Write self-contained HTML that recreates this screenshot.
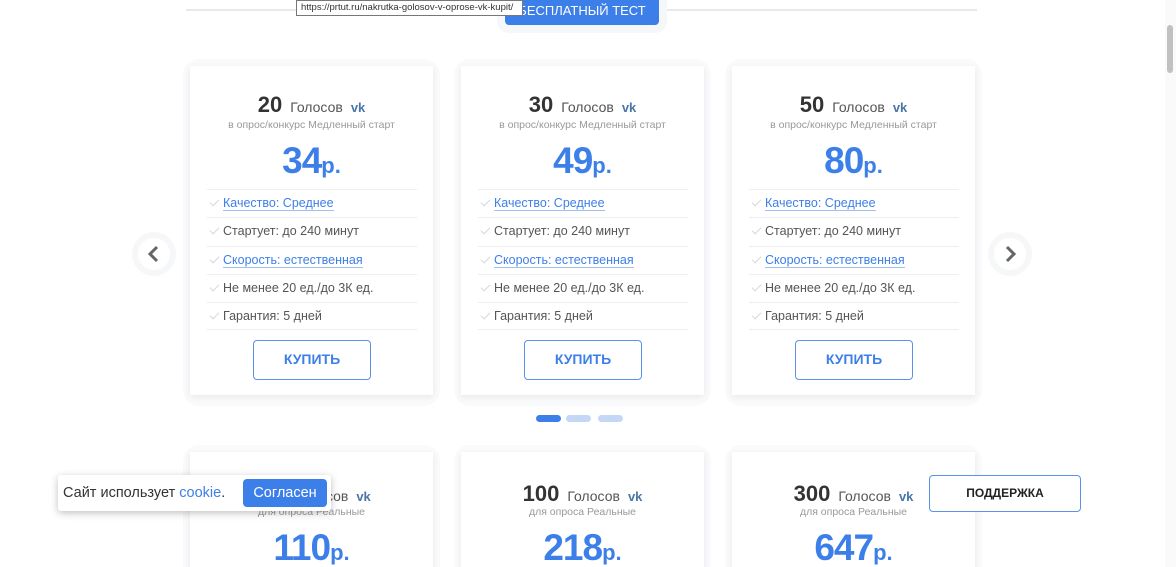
<!DOCTYPE html><html><head><meta charset="utf-8"><style>
*{box-sizing:border-box;margin:0;padding:0}
html,body{width:1176px;height:567px;overflow:hidden}
body{background:#fff;font-family:"Liberation Sans",sans-serif;position:relative;color:#333}
.abs{position:absolute}
.halo{position:absolute;background:#f9fafb;border-radius:16px}
.card{position:absolute;width:243px;background:#fff;box-shadow:0 2px 6px rgba(0,0,0,.07);text-align:center}
.t{position:absolute;left:0;right:0;top:26px;font-size:14px;color:#555}
.t b{font-size:22px;color:#333;font-weight:bold;margin-right:8px}
.vk{color:#4a76a8;font-weight:bold;font-size:13px;margin-left:8px}
.s{position:absolute;left:0;right:0;top:53px;font-size:10.5px;color:#999}
.p{position:absolute;left:0;right:0;top:74px;font-size:37px;font-weight:bold;color:#3d7fe8;letter-spacing:-1px}
.p span{font-size:22px;letter-spacing:0}
.rows{position:absolute;left:17px;width:210px;top:123px}
.r{height:28.3px;border-top:1px solid #eceef1;text-align:left;font-size:12.5px;color:#555;line-height:27px;padding-left:16px;position:relative}
.r:before{content:"";position:absolute;left:3px;top:9px;width:8px;height:4px;border-left:1.3px solid #d5d8dc;border-bottom:1.3px solid #d5d8dc;transform:rotate(-45deg)}
.r.l a{color:#3d7fe8;border-bottom:1px solid #9dbff3;text-decoration:none}
.r.last{border-bottom:1px solid #eceef1}
.btn{position:absolute;left:63px;top:274px;width:118px;height:40px;border:1.5px solid #5b92ec;border-radius:4px;color:#3d7fe8;font-weight:bold;font-size:14px;line-height:37px}
.arr{position:absolute;width:32px;height:32px;border-radius:50%;background:#fff;box-shadow:0 0 0 6px #f6f7f9}
</style></head><body>
<div class="abs" style="left:186px;top:9px;width:791px;height:2px;background:#e8e9ec"></div>
<div class="abs" style="left:497px;top:0;width:170px;height:33px;background:#f6f7f9;border-radius:0 0 12px 12px"></div>
<div class="abs" style="left:505px;top:0;width:154px;height:25px;background:#3d7fe8;border-radius:0 0 4px 4px;color:#fff;font-size:13px;line-height:22px;text-align:center">БЕСПЛАТНЫЙ ТЕСТ</div>
<div class="abs" style="left:296px;top:0;width:227px;height:16px;background:#fff;border:1px solid #777;font-size:9.5px;line-height:14px;padding-left:4px;color:#333">https://prtut.ru/nakrutka-golosov-v-oprose-vk-kupit/</div>

<div class="halo" style="left:183px;top:59px;width:257px;height:347px"></div>
<div class="halo" style="left:454px;top:59px;width:257px;height:347px"></div>
<div class="halo" style="left:725px;top:59px;width:257px;height:347px"></div>
<div class="halo" style="left:183px;top:445px;width:257px;height:140px"></div>
<div class="halo" style="left:454px;top:445px;width:257px;height:140px"></div>
<div class="halo" style="left:725px;top:445px;width:257px;height:140px"></div>

<div class="card" style="left:190px;top:66px;height:329px"><div class="t"><b>20</b>Голосов<span class="vk">vk</span></div><div class="s">в опрос/конкурс Медленный старт</div><div class="p">34<span>р.</span></div>
<div class="rows"><div class="r l"><a>Качество: Среднее</a></div><div class="r">Стартует: до 240 минут</div><div class="r l"><a>Скорость: естественная</a></div><div class="r">Не менее 20 ед./до 3К ед.</div><div class="r last">Гарантия: 5 дней</div></div><div class="btn">КУПИТЬ</div></div>
<div class="card" style="left:461px;top:66px;height:329px"><div class="t"><b>30</b>Голосов<span class="vk">vk</span></div><div class="s">в опрос/конкурс Медленный старт</div><div class="p">49<span>р.</span></div>
<div class="rows"><div class="r l"><a>Качество: Среднее</a></div><div class="r">Стартует: до 240 минут</div><div class="r l"><a>Скорость: естественная</a></div><div class="r">Не менее 20 ед./до 3К ед.</div><div class="r last">Гарантия: 5 дней</div></div><div class="btn">КУПИТЬ</div></div>
<div class="card" style="left:732px;top:66px;height:329px"><div class="t"><b>50</b>Голосов<span class="vk">vk</span></div><div class="s">в опрос/конкурс Медленный старт</div><div class="p">80<span>р.</span></div>
<div class="rows"><div class="r l"><a>Качество: Среднее</a></div><div class="r">Стартует: до 240 минут</div><div class="r l"><a>Скорость: естественная</a></div><div class="r">Не менее 20 ед./до 3К ед.</div><div class="r last">Гарантия: 5 дней</div></div><div class="btn">КУПИТЬ</div></div>

<div class="card" style="left:190px;top:452px;height:130px"><div class="t" style="top:29px"><b>110</b>Голосов<span class="vk">vk</span></div><div class="s" style="top:54px">для опроса Реальные</div><div class="p" style="top:75px">110<span>р.</span></div></div>
<div class="card" style="left:461px;top:452px;height:130px"><div class="t" style="top:29px"><b>100</b>Голосов<span class="vk">vk</span></div><div class="s" style="top:54px">для опроса Реальные</div><div class="p" style="top:75px">218<span>р.</span></div></div>
<div class="card" style="left:732px;top:452px;height:130px"><div class="t" style="top:29px"><b>300</b>Голосов<span class="vk">vk</span></div><div class="s" style="top:54px">для опроса Реальные</div><div class="p" style="top:75px">647<span>р.</span></div></div>

<div class="arr" style="left:138px;top:238px"><svg width="32" height="32"><path d="M19 9 L12 16 L19 23" fill="none" stroke="#666" stroke-width="3"/></svg></div>
<div class="arr" style="left:994px;top:238px"><svg width="32" height="32"><path d="M13 9 L20 16 L13 23" fill="none" stroke="#666" stroke-width="3"/></svg></div>

<div class="abs" style="left:536px;top:415px;width:25px;height:7px;border-radius:4px;background:#3d7fe8"></div>
<div class="abs" style="left:566px;top:415px;width:25px;height:7px;border-radius:4px;background:#c4d7f7"></div>
<div class="abs" style="left:598px;top:415px;width:25px;height:7px;border-radius:4px;background:#c4d7f7"></div>

<div class="abs" style="left:58px;top:475px;width:273px;height:36px;background:#fff;box-shadow:0 2px 8px rgba(0,0,0,.25);border-radius:3px;font-size:14.5px;line-height:36px;padding-left:5px;color:#333">Сайт использует <span style="color:#3d7fe8">cookie</span>.</div>
<div class="abs" style="left:243px;top:479px;width:84px;height:28px;background:#3d7fe8;border-radius:4px;color:#fff;font-size:14.5px;line-height:28px;text-align:center">Согласен</div>

<div class="abs" style="left:929px;top:475px;width:152px;height:37px;background:#fff;border:1.5px solid #5b92ec;border-radius:4px;font-size:12px;font-weight:bold;line-height:34px;text-align:center;color:#222">ПОДДЕРЖКА</div>

<div class="abs" style="left:1165px;top:0;width:11px;height:567px;background:#fafafa"></div>
<div class="abs" style="left:1167px;top:25px;width:6px;height:48px;background:#c1c1c1;border-radius:3px"></div>
</body></html>
